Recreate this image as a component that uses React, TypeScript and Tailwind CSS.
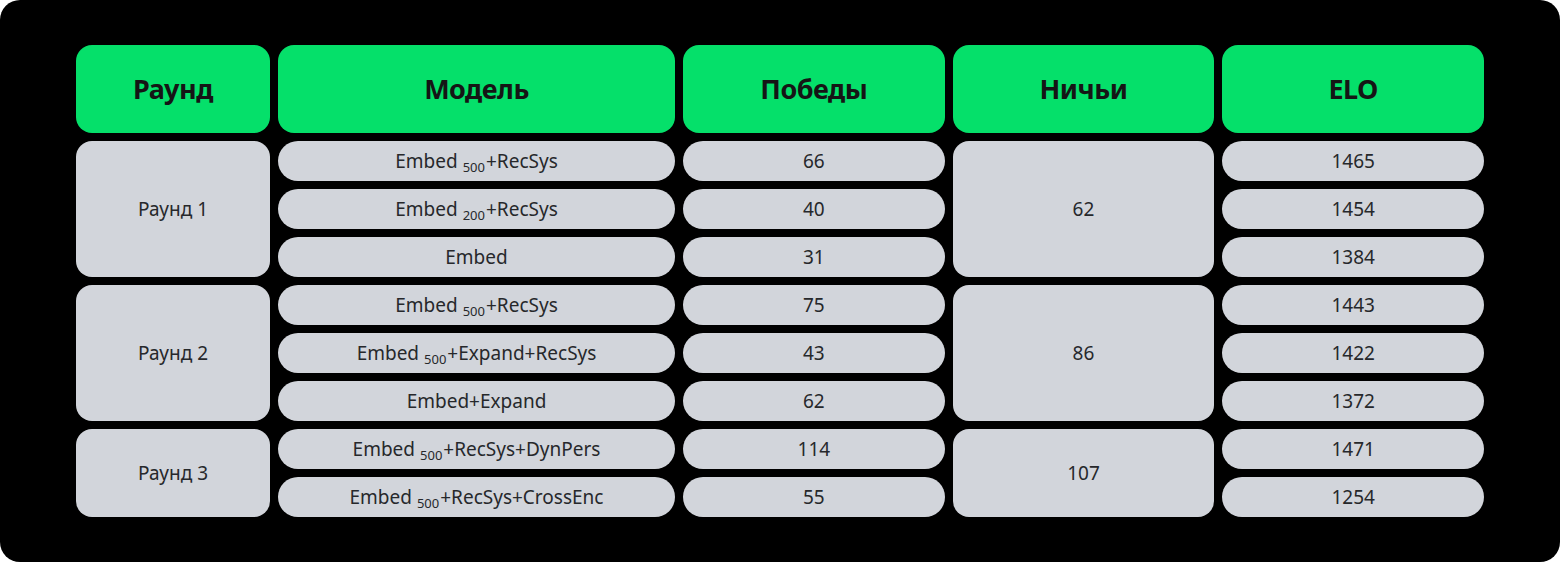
const headers = ["Раунд", "Модель", "Победы", "Ничьи", "ELO"]

type Row = { sub?: string; rest: string; wins: number; elo: number }

const rounds: { name: string; draws: number; rows: Row[] }[] = [
  {
    name: "Раунд 1",
    draws: 62,
    rows: [
      { sub: "500", rest: "+RecSys", wins: 66, elo: 1465 },
      { sub: "200", rest: "+RecSys", wins: 40, elo: 1454 },
      { rest: "", wins: 31, elo: 1384 },
    ],
  },
  {
    name: "Раунд 2",
    draws: 86,
    rows: [
      { sub: "500", rest: "+RecSys", wins: 75, elo: 1443 },
      { sub: "500", rest: "+Expand+RecSys", wins: 43, elo: 1422 },
      { rest: "+Expand", wins: 62, elo: 1372 },
    ],
  },
  {
    name: "Раунд 3",
    draws: 107,
    rows: [
      { sub: "500", rest: "+RecSys+DynPers", wins: 114, elo: 1471 },
      { sub: "500", rest: "+RecSys+CrossEnc", wins: 55, elo: 1254 },
    ],
  },
]

const cell = "flex items-center justify-center bg-[#d2d5db] text-[#26282b] text-[19px]"

function Model({ row }: { row: Row }) {
  return (
    <span>
      Embed
      {row.sub && <span className="ml-[5px] mr-[1px] text-[13px] relative top-[4px]">{row.sub}</span>}
      {row.rest}
    </span>
  )
}

export default function App() {
  return (
    <div className="w-[1560px] h-[562px] bg-white" style={{ fontFamily: '"Noto Sans", "Open Sans", sans-serif' }}>
      <div className="w-full h-full bg-black rounded-[20px] px-[76px] pt-[45px]">
        <div className="grid grid-cols-[194px_397px_1fr_1fr_1fr] grid-rows-[88px] auto-rows-[40px] gap-[8px]">
          {headers.map((h) => (
            <div
              key={h}
              className="flex items-center justify-center rounded-[16px] bg-[#05e06a] text-[#151515] text-[27px] font-bold tracking-[-0.5px]"
            >
              {h}
            </div>
          ))}
          {rounds.map((r) =>
            r.rows.map((row, i) => (
              <>
                {i === 0 && (
                  <div className={`${cell} rounded-[16px] ${r.rows.length === 3 ? "row-span-3" : "row-span-2"}`}>
                    {r.name}
                  </div>
                )}
                <div className={`${cell} rounded-full`}>
                  <Model row={row} />
                </div>
                <div className={`${cell} rounded-full`}>{row.wins}</div>
                {i === 0 && (
                  <div className={`${cell} rounded-[16px] ${r.rows.length === 3 ? "row-span-3" : "row-span-2"}`}>
                    {r.draws}
                  </div>
                )}
                <div className={`${cell} rounded-full`}>{row.elo}</div>
              </>
            ))
          )}
        </div>
      </div>
    </div>
  )
}
